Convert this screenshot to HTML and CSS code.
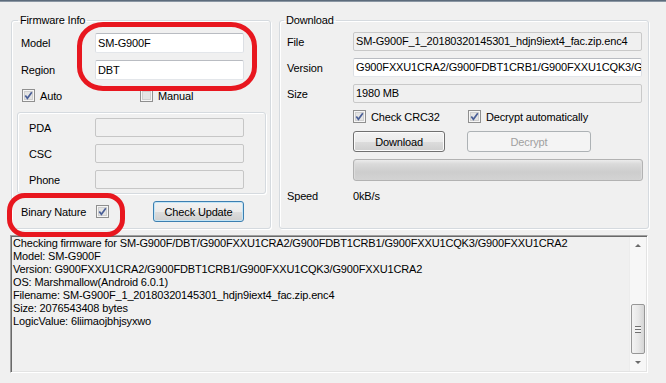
FILE: index.html
```html
<!DOCTYPE html>
<html>
<head>
    <title>Firmware Download</title>
    <link rel="stylesheet" href="styles.css">
</head>
<body>
    <div class="window-edge"></div>

    <div class="window">
        <div class="top-panels">
            <fieldset class="group firmware-group">
                <legend>Firmware Info</legend>
                <div class="field-row first">
                    <span class="field-label">Model</span>
                    <div class="textbox">SM-G900F</div>
                </div>
                <div class="field-row">
                    <span class="field-label">Region</span>
                    <div class="textbox">DBT</div>
                </div>
                <div class="option-row">
                    <span class="check check-auto">
                        <svg class="checkbox" width="13" height="13" viewBox="0 0 13 13"><rect x="0.5" y="0.5" width="12" height="12" fill="#f6f6f6" stroke="#8f8f8f"/><rect x="2.5" y="2.5" width="8" height="8" fill="#e4e4e4" stroke="#cfcfcf"/><path d="M3.3 6.4 L5.4 9.2 L9.8 3.2" fill="none" stroke="#4a5f97" stroke-width="1.7"/></svg>
                        Auto
                    </span>
                    <span class="check">
                        <svg class="checkbox" width="13" height="13" viewBox="0 0 13 13"><rect x="0.5" y="0.5" width="12" height="12" fill="#f6f6f6" stroke="#8f8f8f"/><rect x="2.5" y="2.5" width="8" height="8" fill="#e4e4e4" stroke="#cfcfcf"/></svg>
                        Manual
                    </span>
                </div>

                <div class="device-box">
                    <div class="device-row">
                        <span class="device-label">PDA</span>
                        <div class="textbox disabled"></div>
                    </div>
                    <div class="device-row">
                        <span class="device-label">CSC</span>
                        <div class="textbox disabled"></div>
                    </div>
                    <div class="device-row">
                        <span class="device-label">Phone</span>
                        <div class="textbox disabled"></div>
                    </div>
                </div>

                <div class="binary-row">
                    <span class="binary-label">Binary Nature</span>
                    <svg class="checkbox" width="13" height="13" viewBox="0 0 13 13"><rect x="0.5" y="0.5" width="12" height="12" fill="#f6f6f6" stroke="#8f8f8f"/><rect x="2.5" y="2.5" width="8" height="8" fill="#e4e4e4" stroke="#cfcfcf"/><path d="M3.3 6.4 L5.4 9.2 L9.8 3.2" fill="none" stroke="#4a5f97" stroke-width="1.7"/></svg>
                    <button class="win-button default-button check-update">Check Update</button>
                </div>
            </fieldset>

            <fieldset class="group download-group">
                <legend>Download</legend>
                <div class="info-row first">
                    <span class="info-label">File</span>
                    <div class="textbox readonly wide">SM-G900F_1_20180320145301_hdjn9iext4_fac.zip.enc4</div>
                </div>
                <div class="info-row">
                    <span class="info-label">Version</span>
                    <div class="textbox wide">G900FXXU1CRA2/G900FDBT1CRB1/G900FXXU1CQK3/G900FXXU1CRA2</div>
                </div>
                <div class="info-row">
                    <span class="info-label">Size</span>
                    <div class="textbox readonly wide">1980 MB</div>
                </div>
                <div class="download-options">
                    <span class="check check-crc">
                        <svg class="checkbox" width="13" height="13" viewBox="0 0 13 13"><rect x="0.5" y="0.5" width="12" height="12" fill="#f6f6f6" stroke="#8f8f8f"/><rect x="2.5" y="2.5" width="8" height="8" fill="#e4e4e4" stroke="#cfcfcf"/><path d="M3.3 6.4 L5.4 9.2 L9.8 3.2" fill="none" stroke="#4a5f97" stroke-width="1.7"/></svg>
                        Check CRC32
                    </span>
                    <span class="check">
                        <svg class="checkbox" width="13" height="13" viewBox="0 0 13 13"><rect x="0.5" y="0.5" width="12" height="12" fill="#f6f6f6" stroke="#8f8f8f"/><rect x="2.5" y="2.5" width="8" height="8" fill="#e4e4e4" stroke="#cfcfcf"/><path d="M3.3 6.4 L5.4 9.2 L9.8 3.2" fill="none" stroke="#4a5f97" stroke-width="1.7"/></svg>
                        Decrypt automatically
                    </span>
                </div>
                <div class="download-buttons">
                    <button class="win-button download-button">Download</button>
                    <button class="win-button disabled-button decrypt-button">Decrypt</button>
                </div>
                <div class="progress-bar"></div>
                <div class="speed-row">
                    <span class="info-label">Speed</span>
                    <span>0kB/s</span>
                </div>
            </fieldset>
        </div>

        <div class="log">
            <div class="log-text">
                <div>Checking firmware for SM-G900F/DBT/G900FXXU1CRA2/G900FDBT1CRB1/G900FXXU1CQK3/G900FXXU1CRA2</div>
                <div>Model: SM-G900F</div>
                <div>Version: G900FXXU1CRA2/G900FDBT1CRB1/G900FXXU1CQK3/G900FXXU1CRA2</div>
                <div>OS: Marshmallow(Android 6.0.1)</div>
                <div>Filename: SM-G900F_1_20180320145301_hdjn9iext4_fac.zip.enc4</div>
                <div>Size: 2076543408 bytes</div>
                <div>LogicValue: 6liimaojbhjsyxwo</div>
            </div>
            <div class="scrollbar">
                <div class="scroll-btn"><span class="arrow-up"></span></div>
                <div class="scroll-track"></div>
                <div class="scroll-thumb"><span class="grip"></span></div>
                <div class="scroll-rest"></div>
                <div class="scroll-btn"><span class="arrow-down"></span></div>
            </div>
        </div>
    </div>

    <!-- red annotation marks drawn over the window -->
    <div class="mark mark-model"></div>
    <div class="mark mark-binary"></div>
</body>
</html>
```

FILE: styles.css
```css
body {
    margin: 0;
    width: 666px;
    height: 383px;
    overflow: hidden;
    position: relative;
    background-color: #f0f0f0;
    font-family: "Liberation Sans", Arial, sans-serif;
    font-size: 11px;
    letter-spacing: -0.15px;
    color: #000;
}
.window-edge {
    height: 1px;
    background-color: #5d6c7c;
    border-bottom: 1px solid #8a96a3;
}
.window {
    padding: 12px 0 0 10px;
}
.top-panels {
    display: flex;
    gap: 8px;
    margin-left: 1px;
}
.group {
    margin: 0;
    box-sizing: border-box;
    border: 1px solid #d5dadf;
    border-radius: 3px;
    box-shadow: inset 1px 1px 0 #fff, 1px 1px 0 #fff;
}
.group legend {
    padding: 0 2px;
    margin-left: -3px;
    line-height: 13px;
}
.firmware-group {
    width: 260px;
    padding: 0 4px 6px 9px;
}
.download-group {
    width: 370px;
    padding: 0 5px 6px 7px;
}
.field-row {
    display: flex;
    align-items: center;
    height: 20px;
    margin-top: 7px;
}
.field-row.first {
    margin-top: 6px;
}
.field-label {
    width: 74px;
}
.textbox {
    box-sizing: border-box;
    width: 149px;
    height: 20px;
    padding: 0 2px;
    line-height: 18px;
    border: 1px solid;
    border-color: #b9bcc2 #dcdfe4 #e3e6ea #dcdfe4;
    border-radius: 2px;
    background-color: #fff;
    white-space: nowrap;
    overflow: hidden;
}
.textbox.disabled {
    height: 19px;
    background-color: #f0f0f0;
    border-color: #c6c6c6;
}
.textbox.readonly {
    background-color: #f0f0f0;
    border-color: #c9c9c9;
}
.textbox.wide {
    width: 289px;
    height: 19px;
    line-height: 17px;
}
.option-row {
    display: flex;
    align-items: center;
    height: 13px;
    margin: 9px 0 0 1px;
}
.check {
    display: flex;
    align-items: center;
    gap: 5px;
}
.checkbox {
    display: block;
    flex-shrink: 0;
}
.check-auto {
    width: 118px;
}
.device-box {
    margin: 10px 0 0 -4px;
    padding: 5px 0 4px 11px;
    border: 1px solid #d5dadf;
    border-radius: 3px;
    box-shadow: inset 1px 1px 0 #fff, 1px 1px 0 #fff;
}
.device-row {
    display: flex;
    align-items: center;
    height: 19px;
}
.device-row + .device-row {
    margin-top: 7px;
}
.device-label {
    width: 66px;
}
.binary-row {
    display: flex;
    align-items: center;
    height: 21px;
    margin-top: 7px;
}
.binary-label {
    width: 75px;
}
.win-button {
    box-sizing: border-box;
    height: 21px;
    padding: 0;
    font-family: inherit;
    font-size: 11px;
    letter-spacing: -0.15px;
    color: #000;
    border: 1px solid #707070;
    border-radius: 3px;
    background: linear-gradient(#f2f2f2 0%, #ebebeb 50%, #dddddd 51%, #cfcfcf 100%);
    box-shadow: inset 0 0 0 1px #fbfbfb;
}
.default-button {
    border-color: #3c7fb1;
    box-shadow: inset 0 0 0 1px #c4e5f6;
}
.check-update {
    width: 91px;
    margin-left: 44px;
}
.info-row {
    display: flex;
    align-items: center;
    height: 19px;
    margin-top: 7px;
}
.info-row.first {
    margin-top: 5px;
}
.info-label {
    width: 66px;
}
.download-options {
    display: flex;
    align-items: center;
    height: 13px;
    margin: 7px 0 0 66px;
}
.check-crc {
    width: 115px;
}
.download-buttons {
    display: flex;
    height: 21px;
    margin: 8px 0 0 66px;
}
.download-button {
    width: 92px;
}
.disabled-button {
    color: #a0a0a0;
    border-color: #adb2b5;
    background: #f4f4f4;
    box-shadow: none;
}
.decrypt-button {
    width: 124px;
    margin-left: 22px;
}
.progress-bar {
    box-sizing: border-box;
    width: 290px;
    height: 22px;
    margin: 7px 0 0 66px;
    border: 1px solid #b2b2b2;
    border-radius: 3px;
    background: linear-gradient(#ececec 0%, #dadada 20%, #cdcdcd 60%, #d3d3d3 100%);
    box-shadow: inset 1px 0 0 #dcdcdc, inset -1px 0 0 #dcdcdc;
}
.speed-row {
    display: flex;
    align-items: center;
    height: 14px;
    margin-top: 8px;
}
.log {
    display: flex;
    box-sizing: border-box;
    width: 638px;
    height: 138px;
    margin-top: 6px;
    border: 1px solid;
    border-color: #a0a0a0 #fff #fff #a0a0a0;
    box-shadow: inset 1px 1px 0 #696969, inset -1px -1px 0 #e3e3e3;
}
.log-text {
    flex-grow: 1;
    padding: 1px 2px;
    line-height: 13px;
    white-space: nowrap;
    overflow: hidden;
}
.scrollbar {
    display: flex;
    flex-direction: column;
    width: 17px;
    margin: 1px 1px 1px 0;
    background-color: #f7f7f7;
    box-shadow: inset 1px 0 0 #ececec;
}
.scroll-btn {
    height: 17px;
    display: flex;
    align-items: center;
    justify-content: center;
}
.arrow-up {
    border-left: 3px solid transparent;
    border-right: 3px solid transparent;
    border-bottom: 3px solid #6b6b6b;
}
.arrow-down {
    border-left: 3px solid transparent;
    border-right: 3px solid transparent;
    border-top: 3px solid #6b6b6b;
}
.scroll-track {
    height: 50px;
}
.scroll-thumb {
    box-sizing: border-box;
    height: 50px;
    margin: 0 1px 0 2px;
    border: 1px solid #979797;
    border-radius: 2px;
    background: linear-gradient(90deg, #f3f3f3 0%, #e8e8e8 50%, #d6d6d6 100%);
    display: flex;
    align-items: center;
    justify-content: center;
}
.grip {
    width: 6px;
    height: 5px;
    border-top: 1px solid #6f6f6f;
    border-bottom: 1px solid #6f6f6f;
    background: linear-gradient(#f3f3f3 0, #f3f3f3 2px, #6f6f6f 2px, #6f6f6f 3px, #f3f3f3 3px);
}
.scroll-rest {
    flex-grow: 1;
}
.mark {
    position: absolute;
    box-sizing: border-box;
    border: 5px solid #e8171f;
}
.mark-model {
    left: 77px;
    top: 22px;
    width: 180px;
    height: 69px;
    border-radius: 26px / 24px;
}
.mark-binary {
    left: 7px;
    top: 193px;
    width: 118px;
    height: 44px;
    border-radius: 18px;
}
```
